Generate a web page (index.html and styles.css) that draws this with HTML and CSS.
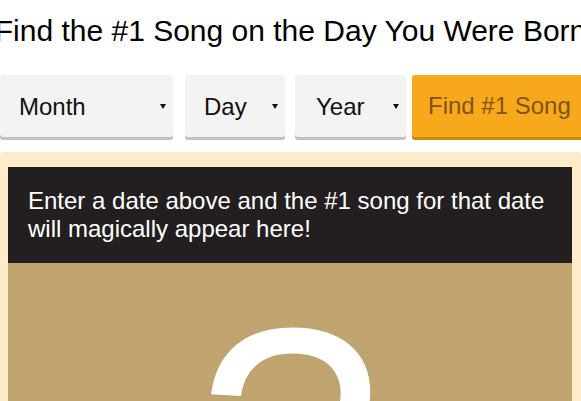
FILE: index.html
```html
<!DOCTYPE html>
<html lang="en">
<head>
<meta charset="utf-8">
<title>Find the #1 Song on the Day You Were Born</title>
<link rel="stylesheet" href="styles.css">
</head>
<body>
<div class="page">
  <h1 class="title">Find the #1 Song on the Day You Were Born</h1>
  <form class="controls">
    <label class="picker picker-month">
      <select class="picker-input"><option>Month</option></select>
      <svg class="caret" width="6" height="5" viewBox="0 0 6 5"><path d="M0 0H6L3 5Z"/></svg>
    </label>
    <label class="picker picker-day">
      <select class="picker-input"><option>Day</option></select>
      <svg class="caret" width="6" height="5" viewBox="0 0 6 5"><path d="M0 0H6L3 5Z"/></svg>
    </label>
    <label class="picker picker-year">
      <select class="picker-input picker-input-year"><option>Year</option></select>
      <svg class="caret" width="6" height="5" viewBox="0 0 6 5"><path d="M0 0H6L3 5Z"/></svg>
    </label>
    <button type="button" class="find-btn">Find #1 Song</button>
  </form>
  <section class="result">
    <div class="result-message">Enter a date above and the #1 song for that date will magically appear here!</div>
    <div class="result-art"><span class="art-mark">?</span></div>
  </section>
</div>
</body>
</html>
```

FILE: styles.css
```css
html, body {
  margin: 0;
  padding: 0;
  background: #ffffff;
  overflow: hidden;
}

.page {
  font-family: "Liberation Sans", Arial, sans-serif;
  color: #000;
  width: 581px;
}

.title {
  margin: 14px 0 0 0;
  font-size: 30px;
  line-height: 34px;
  font-weight: normal;
  white-space: nowrap;
  display: flex;
  justify-content: center;
}

.controls {
  display: flex;
  flex-wrap: nowrap;
  margin: 27px 0 0 0;
  height: 65px;
}

.picker {
  position: relative;
  flex: 0 0 auto;
  display: block;
  height: 62px;
  border-radius: 3px;
  background: #f3f3f3;
  box-shadow: 0 3px 0 #c2c2c2;
}

.picker-month { width: 173px; margin-right: 12px; }
.picker-day { width: 100px; margin-right: 10px; }
.picker-year { width: 111px; margin-right: 6px; }

.picker-input {
  appearance: none;
  -webkit-appearance: none;
  border: 0;
  background: transparent;
  width: 100%;
  height: 62px;
  margin: 0;
  padding: 0 0 0 19px;
  font-family: "Liberation Sans", Arial, sans-serif;
  font-size: 24px;
  color: #111;
  outline: none;
}

.picker-input-year { padding-left: 21px; }

.caret {
  position: absolute;
  right: 7px;
  top: 29px;
  fill: #111;
}

.find-btn {
  flex: 0 0 auto;
  height: 62px;
  margin: 0;
  padding: 0 16px;
  border: 0;
  border-radius: 3px;
  background: #f8a81b;
  box-shadow: 0 3px 0 #c98a12;
  color: #7f5412;
  font-family: "Liberation Sans", Arial, sans-serif;
  font-size: 24px;
  white-space: nowrap;
}

.result {
  margin-top: 12px;
  background: #feebc9;
  padding: 15px 9px 0 8px;
  border-radius: 4px 4px 0 0;
}

.result-message {
  background: #231f20;
  color: #ffffff;
  font-size: 24px;
  line-height: 28px;
  padding: 20px 20px 20px 20px;
}

.result-art {
  background: #c0a470;
  height: 400px;
  padding-top: 16px;
  text-align: center;
}

.art-mark {
  display: block;
  color: #ffffff;
  font-size: 333px;
  line-height: 333px;
}
```
